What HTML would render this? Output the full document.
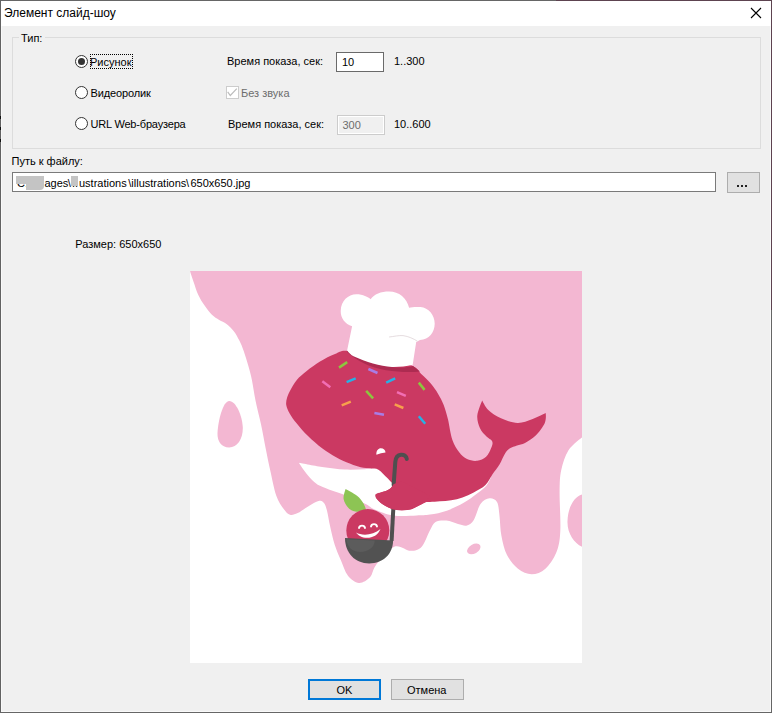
<!DOCTYPE html>
<html><head><meta charset="utf-8">
<style>
*{margin:0;padding:0;box-sizing:border-box}
html,body{width:772px;height:713px;overflow:hidden;background:#f0f0f0}
body{position:relative;font-family:"Liberation Sans",sans-serif;font-size:11px;color:#000}
.a{position:absolute;white-space:nowrap;line-height:1}
.bd{position:absolute}
#title{position:absolute;left:1px;top:1px;width:770px;height:25px;background:#fff}
.wl{position:absolute;background:#fff}
.grp{position:absolute;left:12px;top:37px;width:749px;height:112px;border:1px solid #dcdcdc}
.radio{position:absolute;width:13px;height:13px;border-radius:50%;border:1px solid #333;background:#fff}
.radio.on::after{content:"";position:absolute;left:2px;top:2px;width:7px;height:7px;border-radius:50%;background:#333}
.edit{position:absolute;background:#fff;border:1px solid #7a7a7a}
.btn{position:absolute;background:#e1e1e1;border:1px solid #adadad;text-align:center}
</style></head><body>
<div id="title"></div>
<div class="wl" style="left:1px;top:26px;width:1px;height:686px;background:#f9f9f9"></div>
<div class="wl" style="left:770px;top:26px;width:1px;height:686px;background:#f9f9f9"></div>
<div class="wl" style="left:1px;top:711px;width:770px;height:1px;background:#f9f9f9"></div>
<div class="bd" style="left:0;top:0;width:556px;height:1px;background:#666"></div>
<div class="bd" style="left:556px;top:0;width:216px;height:1px;background:#5d4350"></div>
<div class="bd" style="left:0;top:0;width:1px;height:713px;background:#626262"></div>
<div class="bd" style="left:771px;top:0;width:1px;height:310px;background:#5d4350"></div>
<div class="bd" style="left:771px;top:310px;width:1px;height:403px;background:#666"></div>
<div class="bd" style="left:0;top:712px;width:772px;height:1px;background:#666"></div>
<div class="bd" style="left:0;top:116px;width:1px;height:3px;background:#111"></div><div class="bd" style="left:0;top:127px;width:1px;height:3px;background:#111"></div><div class="bd" style="left:0;top:139px;width:1px;height:3px;background:#111"></div>

<div class="a" style="left:4px;top:7px;font-size:12px">Элемент слайд-шоу</div>
<svg style="position:absolute;left:750px;top:7px" width="12" height="12" viewBox="0 0 12 12"><path d="M1 1L11 11M11 1L1 11" stroke="#000" stroke-width="1.1"/></svg>

<div class="grp"></div>
<div class="a" style="left:19px;top:33px;background:#f0f0f0;padding:0 2.6px 0 2px">Тип:</div>

<div class="radio on" style="left:75px;top:55px"></div>
<div class="a" style="left:90px;top:57px">Рисунок</div>
<div style="position:absolute;left:90px;top:54px;width:43px;height:15px;border:1px dotted #000"></div>
<div class="radio" style="left:75px;top:86px"></div>
<div class="a" style="left:90.5px;top:88px;letter-spacing:-0.12px">Видеоролик</div>
<div class="radio" style="left:75px;top:117px"></div>
<div class="a" style="left:90.5px;top:119px;letter-spacing:-0.18px">URL Web-браузера</div>

<div class="a" style="left:227px;top:56px">Время показа, сек:</div>
<div class="edit" style="left:336px;top:52px;width:48px;height:20px;border-color:#6a6a6a"></div>
<div class="a" style="left:342px;top:57px">10</div>
<div class="a" style="left:394px;top:56px">1..300</div>

<div style="position:absolute;left:226px;top:86px;width:13px;height:13px;border:1px solid #ccc;background:#fff"></div><svg style="position:absolute;left:226px;top:86px" width="13" height="13" viewBox="0 0 13 13"><path d="M1.7 5.8L4.3 9.5L10.8 2.7" fill="none" stroke="#bcbcbc" stroke-width="1.2"/></svg>
<div class="a" style="left:241px;top:88px;color:#6d6d6d">Без звука</div>

<div class="a" style="left:228px;top:119px">Время показа, сек:</div>
<div class="edit" style="left:337px;top:115px;width:48px;height:20px;border-color:#ccc;background:#f0f0f0;box-shadow:inset 0 0 0 1px #fff"></div>
<div class="a" style="left:342.5px;top:120px;color:#6d6d6d">300</div>
<div class="a" style="left:394px;top:119px">10..600</div>

<div class="a" style="left:11.5px;top:156px">Путь к файлу:</div>
<div class="edit" style="left:12px;top:172px;width:704px;height:20px"></div>
<div class="a" style="left:17px;top:178px">C:\</div><div class="bd" style="left:16px;top:176px;width:11px;height:7.5px;background:#c4c4c4"></div><div class="bd" style="left:26px;top:175.5px;width:18px;height:14px;background:#c4c4c4;border-radius:1px 0 4px 0"></div><div class="a" style="left:44.5px;top:178px">ages</div><div class="a" style="left:67.8px;top:178px">\</div><div class="a" style="left:72px;top:178px">..</div><div class="bd" style="left:71px;top:176px;width:7px;height:10px;background:#c4c4c4"></div><div class="a" style="left:79px;top:178px">ustrations</div><div class="a" style="left:128.3px;top:178px">\</div><div class="a" style="left:131.3px;top:178px">illustrations</div><div class="a" style="left:186px;top:178px">\</div><div class="a" style="left:190.5px;top:178px">650x650.jpg</div>
<div class="btn" style="left:727px;top:172px;width:33px;height:21px"></div>
<div class="bd" style="left:737px;top:185px;width:2px;height:2px;background:#222"></div><div class="bd" style="left:741px;top:185px;width:2px;height:2px;background:#222"></div><div class="bd" style="left:745px;top:185px;width:2px;height:2px;background:#222"></div>

<div class="a" style="left:75.3px;top:239px">Размер: 650x650</div>

<svg style="position:absolute;left:190px;top:271px" width="392" height="392" viewBox="0 0 392 392">
<rect width="392" height="392" fill="#fff"/>
<path fill="#f3b7d2" d="M0.0,0.0 C0.0,0.0 392.0,0.0 392.0,0.0 C392.0,0.0 392.0,166.5 392.0,166.5 C392.0,166.5 382.0,173.7 378.5,179.2 C375.0,184.7 372.7,192.3 371.2,199.3 C369.7,206.3 369.8,211.1 369.6,221.2 C369.5,231.3 370.8,250.0 370.3,260.0 C369.8,270.0 368.9,274.9 366.4,281.2 C363.9,287.5 359.5,294.0 355.4,297.7 C351.3,301.4 346.3,303.2 341.7,303.2 C337.1,303.2 332.1,300.9 328.0,297.7 C323.9,294.5 319.8,289.5 317.0,284.0 C314.2,278.5 312.6,271.2 311.4,264.7 C310.1,258.2 310.2,250.6 309.5,245.0 C308.8,239.4 308.7,233.9 307.0,231.0 C305.3,228.1 302.2,227.0 299.5,227.3 C296.8,227.6 293.1,229.4 290.5,233.0 C287.9,236.6 286.1,245.4 283.8,249.0 C281.6,252.6 279.6,253.8 277.0,254.5 C274.4,255.2 271.4,253.8 268.0,253.0 C264.6,252.2 260.2,249.9 256.5,249.6 C252.8,249.3 248.2,249.4 245.5,251.0 C242.8,252.6 242.3,255.1 240.0,259.2 C237.7,263.3 234.9,272.3 231.7,275.7 C228.5,279.1 225.3,279.8 220.7,279.8 C216.1,279.8 209.9,273.4 204.2,275.7 C198.5,277.9 190.5,288.2 186.5,293.3 C182.5,298.4 182.9,303.2 180.0,306.3 C177.1,309.4 172.6,312.2 168.9,311.9 C165.2,311.6 160.8,308.2 157.8,304.4 C154.8,300.6 153.1,294.3 150.9,289.2 C148.7,284.1 146.5,279.4 144.7,273.7 C142.9,268.0 141.4,260.8 140.1,255.2 C138.8,249.5 138.0,243.7 137.0,239.8 C136.0,236.0 135.3,233.8 134.0,232.1 C132.7,230.4 131.9,229.3 129.3,229.8 C126.7,230.3 122.1,233.1 118.5,235.2 C114.9,237.2 110.8,240.7 107.7,242.1 C104.6,243.5 102.3,244.3 100.0,243.7 C97.7,243.1 96.2,241.5 93.9,238.3 C91.6,235.1 88.5,230.9 86.2,224.4 C83.9,217.9 82.0,207.1 80.2,199.3 C78.5,191.5 77.2,185.0 75.7,177.4 C74.2,169.8 72.8,161.6 71.1,153.7 C69.4,145.8 67.1,137.4 65.6,130.0 C64.1,122.6 63.2,115.3 62.0,109.4 C60.8,103.5 59.7,99.7 58.3,94.8 C56.9,89.9 55.3,84.5 53.8,80.2 C52.3,76.0 50.9,72.6 49.2,69.3 C47.5,66.0 45.9,62.9 43.8,60.2 C41.7,57.5 38.9,54.8 36.5,52.9 C34.1,51.0 31.6,50.4 29.2,48.9 C26.8,47.4 24.3,46.2 21.9,43.8 C19.5,41.4 16.9,38.0 14.6,34.6 C12.3,31.2 10.0,27.6 8.2,23.7 C6.4,19.8 5.0,14.8 3.6,10.9 C2.2,7.0 0.0,0.0 0.0,0.0 Z"/>
<path fill="#f3b7d2" d="M39.2,130 C46,130 52.5,145 52.8,157 C53,168 47,176.5 39.2,176.5 C31,176.5 27.2,170 27.5,162 C28,150 33,130 39.2,130 Z"/>
<ellipse cx="283.8" cy="277.9" rx="7.3" ry="4.6" transform="rotate(-30 283.8 277.9)" fill="#f3b7d2"/>
<path fill="#f3b7d2" d="M392,223.5 C384,226 378,236 377.5,250 C377,262 384,272 392,275.7 Z"/>
<path fill="#fff" d="M108.9,191.7 C108.9,191.7 124.4,194.8 132.1,196.0 C139.8,197.2 147.8,198.2 155.0,198.6 C162.2,199.0 168.8,198.4 175.0,198.2 C181.2,198.0 179.5,195.2 192.0,197.5 C204.5,199.8 231.8,210.6 250.0,212.0 C268.2,213.4 301.0,206.0 301.0,206.0 C301.0,206.0 298.8,211.8 296.5,214.5 C294.2,217.2 290.9,219.6 287.1,222.5 C283.3,225.4 278.8,228.9 273.7,231.8 C268.6,234.7 262.4,237.7 256.8,239.7 C251.2,241.7 245.0,242.8 240.0,243.6 C235.0,244.4 232.7,244.3 226.6,244.5 C220.5,244.7 210.3,245.5 203.3,244.5 C196.3,243.5 189.3,240.4 184.7,238.5 C180.1,236.6 180.2,235.2 175.6,233.0 C171.0,230.8 164.9,228.0 157.3,225.0 C149.7,222.0 136.6,218.2 130.0,214.8 C123.5,211.4 121.5,208.2 118.0,204.4 C114.5,200.6 108.9,191.7 108.9,191.7 Z"/>
<path fill="#cb3962" d="M96.3,134.2 C95.8,131.6 96.4,129.3 97.0,127.0 C97.6,124.7 98.2,123.2 99.8,120.2 C101.4,117.2 104.0,112.4 106.8,109.0 C109.6,105.6 112.8,103.1 116.7,100.0 C120.6,96.9 125.3,93.3 130.0,90.5 C134.7,87.7 140.3,84.8 145.0,83.0 C149.7,81.2 150.5,79.1 158.0,79.9 C165.5,80.7 179.4,85.5 190.0,88.0 C200.6,90.5 214.5,92.1 221.4,94.6 C228.3,97.1 227.9,100.0 231.2,103.0 C234.5,106.0 238.2,109.5 241.0,112.8 C243.8,116.1 245.9,119.2 248.0,122.7 C250.1,126.2 252.0,129.7 253.7,133.9 C255.3,138.1 256.4,142.1 257.9,147.9 C259.3,153.8 260.5,163.4 262.4,169.0 C264.3,174.6 266.8,178.1 269.2,181.3 C271.6,184.5 274.0,186.7 277.0,188.1 C280.0,189.5 283.9,190.2 287.1,189.8 C290.3,189.4 293.7,188.2 296.1,185.8 C298.5,183.5 300.7,178.3 301.7,175.7 C302.7,173.1 302.9,171.7 302.0,170.0 C301.1,168.3 298.5,167.6 296.5,165.5 C294.5,163.4 291.5,160.8 290.0,157.3 C288.5,153.8 286.9,149.2 287.3,144.6 C287.7,140.0 292.2,129.6 292.2,129.6 C292.2,129.6 295.2,136.1 298.3,139.0 C301.4,141.9 306.1,145.2 311.0,147.3 C315.9,149.5 322.3,151.8 327.5,151.9 C332.7,152.1 337.3,149.9 342.0,148.2 C346.7,146.5 355.7,141.9 355.7,141.9 C355.7,141.9 356.5,148.1 354.8,151.9 C353.1,155.7 349.0,161.2 345.7,164.6 C342.4,167.9 338.1,170.3 335.0,172.0 C331.9,173.7 329.5,173.6 327.0,174.5 C324.5,175.4 322.0,176.0 320.0,177.3 C318.0,178.6 316.9,179.5 315.2,182.2 C313.4,184.9 311.6,190.0 309.5,193.5 C307.4,197.0 304.8,199.9 302.5,203.3 C300.2,206.7 298.6,211.0 295.5,214.0 C292.4,217.0 287.5,219.3 283.7,221.4 C279.9,223.5 276.2,225.1 272.5,226.4 C268.8,227.7 264.9,228.5 261.2,229.2 C257.4,229.8 253.5,230.0 250.0,230.3 C246.5,230.6 242.5,230.8 240.0,231.0 C237.5,231.2 237.1,230.8 235.0,231.5 C232.9,232.2 230.6,234.1 227.6,235.3 C224.6,236.6 220.6,238.4 217.1,239.0 C213.6,239.6 210.1,239.6 206.6,239.0 C203.1,238.4 199.0,236.8 196.0,235.3 C193.0,233.8 190.4,231.8 188.7,230.0 C186.9,228.2 185.8,226.0 185.5,224.8 C185.2,223.6 185.2,223.4 186.6,222.7 C188.0,222.0 191.7,221.5 194.0,220.6 C196.3,219.7 198.7,218.6 200.3,217.4 C201.9,216.2 203.4,213.2 203.4,213.2 C203.4,213.2 196.6,206.2 194.0,203.7 C191.4,201.2 190.2,199.4 188.0,198.4 C185.8,197.4 183.9,198.0 181.0,197.6 C178.1,197.2 174.1,197.0 170.7,196.2 C167.3,195.4 164.5,194.5 160.4,192.8 C156.3,191.2 150.8,188.9 146.1,186.3 C141.4,183.7 136.8,180.8 132.1,177.3 C127.4,173.8 122.2,169.2 118.0,165.1 C113.8,161.0 109.8,156.2 106.8,152.5 C103.8,148.8 101.5,145.8 99.8,142.7 C98.0,139.6 96.8,136.8 96.3,134.2 Z"/>
<path fill="#ad2b51" d="M157,79.5 C170,88 185,92 202,95.9 C210,97 218,96.5 223,95 L230,100.5 C220,101.5 208,101 196,99.2 C180,96.5 167,90 157,81 Z"/>
<path fill="#fff" d="M157.1,79.5 L162.1,55.3 C155,53 150.5,47 150.7,40 C151,30 158,23.3 166.4,23.3 C173,23.3 178,26 180.6,28.2 C184,23 191,20.4 199.1,20.4 C209,20.4 217,27 219.1,36.8 C222,36 226,35.8 230.5,36.1 C238.5,37 244.7,44 244.7,52.5 C244.7,61 239,68.9 230,68.9 L226.2,71 L222.7,93.8 C216,95.5 209,96 202,95.9 C190,95 176,91 163.5,85.2 C161,84 159,82 157.1,79.5 Z"/>
<path fill="none" stroke="#e6dde0" stroke-width="1" d="M199.1,66 C204,65.5 209,64.2 213,64.6 C219,65.5 223,67.5 227.6,70.3"/>
<g stroke-width="2.5" fill="none">
<path stroke="#8cc63f" d="M149,96.6L157.2,91.1"/>
<path stroke="#a87de6" d="M178.4,98L187.5,102"/>
<path stroke="#f26eb4" d="M132.3,110.3L140.3,116.2"/>
<path stroke="#27b1e6" d="M156.6,111.1L165.7,107.4"/>
<path stroke="#27b1e6" d="M196.2,111.6L205.2,107.4"/>
<path stroke="#8cc63f" d="M228.8,111.6L234.6,118.9"/>
<path stroke="#8cc63f" d="M176.2,119.8L183.1,127.4"/>
<path stroke="#f26eb4" d="M207,121.2L215.8,124.9"/>
<path stroke="#f7a04c" d="M151.7,134.3L160.8,130.7"/>
<path stroke="#f7a04c" d="M204.7,133.4L213.4,137"/>
<path stroke="#a87de6" d="M184.4,141.9L194,143.7"/>
<path stroke="#27b1e6" d="M228.8,145.2L235.2,152.8"/>
</g>
<path fill="#fff" d="M186.4,183.7 C186,179.5 188.5,177.2 190.8,177.2 C193.5,177.2 195.5,179 195.5,181.6 C192.5,181.8 189.5,182.5 186.4,183.7 Z"/>
<path fill="none" stroke="#4f4f4f" stroke-width="4" stroke-linecap="round" d="M216.8,188 C216.5,185 214,183.5 211,183.7 C207,184 205.6,187 205.3,191 L203.6,214"/>
<path fill="none" stroke="#4f4f4f" stroke-width="4" d="M203.6,232 L201.6,270"/>
<path fill="#cb3962" d="M185.5,224.8 C186,223 190,221.8 194,220.6 C197,219.5 199,218.5 200.3,217.4 C202,216 203,214.5 203.4,213.2 L212,210 L240,225 L235,231.5 C232,233 230,234 227.6,235.3 C224,237.5 221,239 217.1,239 L206.6,239 C203,239 199,237 196,235.3 C193,233.5 190.5,232 188.7,230 C186.5,228 185.2,226.5 185.5,224.8 Z"/>
<path fill="#8dc454" d="M155.6,218.0 C155.6,218.0 164.0,222.4 167.0,224.8 C170.0,227.2 171.9,229.8 173.5,232.5 C175.1,235.2 176.8,241.2 176.8,241.2 C176.8,241.2 168.4,241.2 165.3,240.5 C162.2,239.8 160.4,239.1 158.5,237.0 C156.6,234.9 154.1,231.2 153.6,228.0 C153.1,224.8 155.6,218.0 155.6,218.0 Z"/>
<circle cx="177.8" cy="259.5" r="21.5" fill="#cb3962"/>
<g fill="none" stroke="#fff" stroke-width="1.9" stroke-linecap="round">
<path d="M169,257 C169.5,253.8 174.5,253.8 175,257"/>
<path d="M181,255.5 C181.5,252.3 186.5,252.3 187,255.5"/>
</g>
<path fill="#fff" d="M166,261.5 C172,265 183,264.5 190.5,258 C188,264 183,266.8 177,266.8 C172,266.8 168,264.5 166,261.5 Z"/>
<path fill="#525252" d="M155,267.1 L203.1,269.6 C203,283 193,292.5 179.1,292.5 C165,292.5 155,282 155,267.1 Z"/>
<path fill="#5c5c5c" d="M156.4,268.2 L184.8,269.6 C184.5,276.5 178,281 170.5,281 C162,281 157,275.5 156.4,268.2 Z"/>
</svg>










<div class="btn" style="left:308px;top:679px;width:73px;height:21px;border:2px solid #0078d7"></div>
<div class="a" style="left:336.5px;top:685px">OK</div>
<div class="btn" style="left:391px;top:679px;width:73px;height:21px"></div>
<div class="a" style="left:407px;top:685px">Отмена</div>
</body></html>
